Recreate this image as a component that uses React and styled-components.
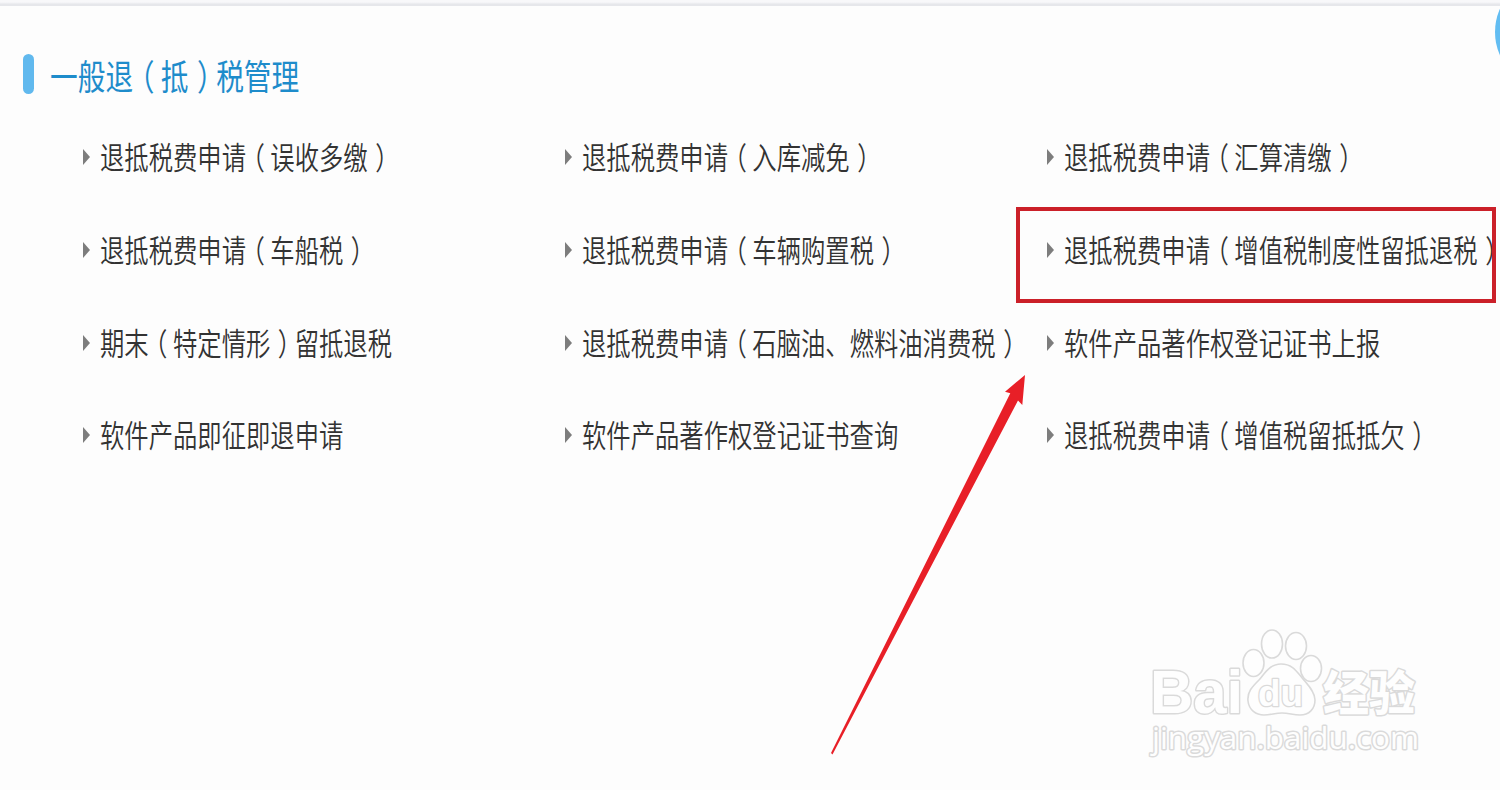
import styled, { createGlobalStyle } from "styled-components";

const GlobalStyle = createGlobalStyle`
  body {
    margin: 0;
    background: #fdfdfd;
    font-family: "Noto Sans CJK SC", sans-serif;
  }
`;

const Page = styled.main`
  position: relative;
  width: 1500px;
  height: 790px;
  overflow: hidden;
`;

const TopEdge = styled.div`
  height: 6px;
  background: linear-gradient(#f8f8fa 0 35%, #e6e7eb 70% 100%);
`;

const Header = styled.header`
  display: flex;
  align-items: center;
  gap: 16px;
  height: 40px;
  padding: 48px 0 0 23px;
`;

const Marker = styled.span`
  width: 11px;
  height: 40px;
  border-radius: 6px;
  background: #61b9ee;
`;

const Title = styled.h1`
  margin: 2px 0 0;
  font-size: 27.7px;
  font-weight: 400;
  line-height: 40px;
  color: #1e8ccb;
  white-space: nowrap;
  transform: scaleY(1.28);
`;

const Links = styled.ul`
  display: grid;
  grid-template-columns: repeat(3, 482px);
  grid-auto-rows: 92.7px;
  margin: 0;
  padding: 17px 0 0 83px;
  list-style: none;
`;

const Item = styled.li`
  display: flex;
  align-items: center;
  gap: 10px;
`;

const Caret = styled.span`
  border: solid transparent;
  border-width: 8px 0 8px 7px;
  border-left-color: #7d7d7d;
`;

const Label = styled.a`
  margin-bottom: 2px;
  font-size: 24.33px;
  font-weight: 350;
  line-height: 40px;
  color: #333;
  white-space: nowrap;
  transform: scaleY(1.28);
`;

// half-width form with space on both sides, so brackets sit mid-cell
const Paren = styled.span`
  margin-left: ${(p) => p.$before}em;
  margin-right: ${(p) => 0.5 - p.$before}em;
  font-feature-settings: "halt";
`;

const Highlight = styled.div`
  position: absolute;
  left: 1016px;
  top: 207px;
  width: 480px;
  height: 96px;
  box-sizing: border-box;
  border: 4px solid #cb2029;
`;

const Bubble = styled.div`
  position: absolute;
  left: 1495px;
  top: -25px;
  width: 114px;
  height: 114px;
  border-radius: 50%;
  background: #62bdf2;
`;

const Arrow = styled.svg`
  position: absolute;
  left: 820px;
  top: 365px;
`;

const Watermark = styled.svg`
  position: absolute;
  left: 1140px;
  top: 620px;
  fill: #fefefe;
  stroke: #dadada;
  stroke-width: 3px;
  stroke-linejoin: round;

  text {
    paint-order: stroke;
  }
`;

const links = [
  "退抵税费申请（误收多缴）",
  "退抵税费申请（入库减免）",
  "退抵税费申请（汇算清缴）",
  "退抵税费申请（车船税）",
  "退抵税费申请（车辆购置税）",
  "退抵税费申请（增值税制度性留抵退税）",
  "期末（特定情形）留抵退税",
  "退抵税费申请（石脑油、燃料油消费税）",
  "软件产品著作权登记证书上报",
  "软件产品即征即退申请",
  "软件产品著作权登记证书查询",
  "退抵税费申请（增值税留抵抵欠）",
];

function withParens(text) {
  return text.split(/([（）])/).map((part, i) => {
    if (part === "（") return <Paren key={i} $before={0.27}>{part}</Paren>;
    if (part === "）") return <Paren key={i} $before={0.31}>{part}</Paren>;
    return part;
  });
}

function BaiduMark() {
  return (
    <Watermark width="290" height="145" viewBox="0 0 290 145">
      <text x="10" y="92.5" fontFamily="Liberation Sans" fontWeight="700" fontSize="62" textLength="93" lengthAdjust="spacingAndGlyphs">Bai</text>
      <g strokeWidth="1.6">
        <ellipse cx="113.5" cy="43" rx="10.5" ry="13.5" />
        <ellipse cx="132" cy="24" rx="10.5" ry="14" />
        <ellipse cx="156" cy="26" rx="10.5" ry="13.5" />
        <ellipse cx="171" cy="48.5" rx="10.5" ry="13" />
        <path d="M141 44C130 44 125 53 119 60C112 67 107 72 108 81C109 90 116 95 124 95C131 95 135 93 142 93C149 93 153 95 160 95C169 95 175 89 175 80C175 72 168 65 163 59C157 52 153 44 141 44Z" />
      </g>
      <text x="118" y="86" fontFamily="Liberation Sans" fontWeight="700" fontSize="37" strokeWidth="2.6" textLength="45" lengthAdjust="spacingAndGlyphs">du</text>
      <text x="183" y="90" fontFamily="Noto Sans CJK SC" fontWeight="900" fontSize="47" textLength="92" lengthAdjust="spacingAndGlyphs">经验</text>
      <text x="12" y="129" fontFamily="Open Sans" fontSize="31" textLength="267" lengthAdjust="spacingAndGlyphs">jingyan.baidu.com</text>
    </Watermark>
  );
}

export default function App() {
  return (
    <>
      <GlobalStyle />
      <Page>
        <TopEdge />
        <Header>
          <Marker />
          <Title>{withParens("一般退（抵）税管理")}</Title>
        </Header>
        <Links>
          {links.map((text) => (
            <Item key={text}>
              <Caret />
              <Label>{withParens(text)}</Label>
            </Item>
          ))}
        </Links>
        <Bubble />
        <Highlight />
        <Arrow width="220" height="400" viewBox="820 365 220 400">
          <path d="M1025 375L1005 391.7L1010.3 393.3L831 753L832.5 754.5L1018 400.5L1022.3 405Z" fill="#e81f27" />
        </Arrow>
        <BaiduMark />
      </Page>
    </>
  );
}
